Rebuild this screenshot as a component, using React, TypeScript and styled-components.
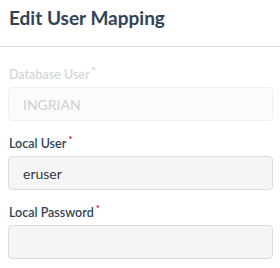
import React from 'react'
import styled, { createGlobalStyle } from 'styled-components'

const GlobalStyle = createGlobalStyle`
  html, body {
    margin: 0;
    padding: 0;
    background: #ffffff;
  }
  body {
    font-family: Lato, "Liberation Sans", sans-serif;
  }
`

const Panel = styled.div`
  width: 280px;
  height: 268px;
  background: #ffffff;
  overflow: hidden;
`

const Header = styled.div`
  height: 47px;
  padding: 7px 9px 0;
  border-bottom: 1px solid #e1e1e1;
  box-sizing: border-box;
`

const Title = styled.h2`
  margin: 0;
  font-size: 19px;
  font-weight: 700;
  color: #2f4459;
  line-height: 22px;
`

const Form = styled.div`
  padding: 19px 7px 0 8px;
  display: flex;
  flex-direction: column;
  gap: 14px;
`

const Field = styled.div`
  display: flex;
  flex-direction: column;
  gap: 4px;
`

const Label = styled.label<{ $disabled?: boolean }>`
  font-size: 12.5px;
  line-height: 17px;
  font-weight: 600;
  padding-left: 1px;
  color: ${(p) => (p.$disabled ? '#d4d7db' : '#2f4459')};
`

const Required = styled.sup<{ $disabled?: boolean }>`
  color: ${(p) => (p.$disabled ? '#f5b5b5' : '#d0021b')};
  font-size: 10px;
  margin-left: 2px;
  line-height: 0;
`

const Input = styled.div<{ $disabled?: boolean }>`
  height: 34px;
  box-sizing: border-box;
  border-radius: 4px;
  border: 1px solid ${(p) => (p.$disabled ? '#f0f0f0' : '#dcdcdc')};
  background: ${(p) => (p.$disabled ? '#fbfbfb' : '#f5f5f5')};
  padding: 0 14px;
  display: flex;
  align-items: center;
  font-size: 14px;
  color: ${(p) => (p.$disabled ? '#cfd1d4' : '#333a42')};
`

const fields = [
  { label: 'Database User', value: 'INGRIAN', disabled: true },
  { label: 'Local User', value: 'eruser', disabled: false },
  { label: 'Local Password', value: '', disabled: false },
]

const App: React.FC = () => {
  return (
    <Panel>
      <GlobalStyle />
      <Header>
        <Title>Edit User Mapping</Title>
      </Header>
      <Form>
        {fields.map((f) => (
          <Field key={f.label}>
            <Label $disabled={f.disabled}>
              {f.label}
              <Required $disabled={f.disabled}>*</Required>
            </Label>
            <Input $disabled={f.disabled}>{f.value}</Input>
          </Field>
        ))}
      </Form>
    </Panel>
  )
}

export default App
